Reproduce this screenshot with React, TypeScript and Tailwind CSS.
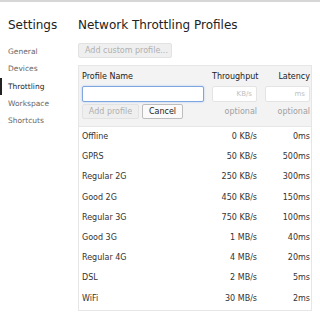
import React from 'react';

interface Profile {
  name: string;
  throughput: string;
  latency: string;
}

const profiles: Profile[] = [
  { name: 'Offline', throughput: '0 KB/s', latency: '0ms' },
  { name: 'GPRS', throughput: '50 KB/s', latency: '500ms' },
  { name: 'Regular 2G', throughput: '250 KB/s', latency: '300ms' },
  { name: 'Good 2G', throughput: '450 KB/s', latency: '150ms' },
  { name: 'Regular 3G', throughput: '750 KB/s', latency: '100ms' },
  { name: 'Good 3G', throughput: '1 MB/s', latency: '40ms' },
  { name: 'Regular 4G', throughput: '4 MB/s', latency: '20ms' },
  { name: 'DSL', throughput: '2 MB/s', latency: '5ms' },
  { name: 'WiFi', throughput: '30 MB/s', latency: '2ms' },
];

const navItems = ['General', 'Devices', 'Throttling', 'Workspace', 'Shortcuts'];

const grid = 'grid grid-cols-[122px_45px_45px] gap-x-[8px] pl-[3px]';

const App: React.FC = () => {
  return (
    <div className="h-[318px] w-[320px] overflow-hidden bg-white font-['DejaVu_Sans',sans-serif] text-[#333]">
      <div className="h-[2px] bg-[#d6d6d6]" />
      <div className="flex">
        <aside className="w-[78px] shrink-0">
          <h1 className="pl-2 pt-[15px] text-[12px] leading-[16px] text-[#222]">
            Settings
          </h1>
          <nav className="mt-[10px] flex flex-col">
            {navItems.map((item) =>
              item === 'Throttling' ? (
                <div
                  key={item}
                  className="flex h-[17.25px] items-center border-l-2 border-[#222] pl-[6px] text-[7.5px] text-[#222]"
                >
                  {item}
                </div>
              ) : (
                <div
                  key={item}
                  className="flex h-[17.25px] items-center pl-2 text-[7.5px] text-[#666]"
                >
                  {item}
                </div>
              )
            )}
          </nav>
        </aside>

        <main className="w-[234px]">
          <h2 className="pt-[15px] text-[12px] leading-[16px] text-[#222]">
            Network Throttling Profiles
          </h2>
          <button
            disabled
            className="mt-[10px] flex h-[15px] w-[94px] items-center rounded-[2px] border border-[#e2e2e2] bg-[#efefef] pl-[6px] text-[8px] text-[#b0b0b0]"
          >
            Add custom profile...
          </button>

          <div className="mt-[7px] border border-[#e6e6e6]">
            <div className="border-b border-[#e6e6e6] bg-[#f3f3f3] pb-[7px] pt-[2px]">
              <div className={`${grid} h-[18px] items-center text-[8px] text-[#222]`}>
                <span>Profile Name</span>
                <span className="text-right">Throughput</span>
                <span className="text-right">Latency</span>
              </div>
              <div className={`${grid} h-[16px]`}>
                <input
                  className="h-full rounded-[2px] border border-[#7ea6e0] bg-white px-1 text-[8px] shadow-[0_0_2px_#9fc0ee] outline-none"
                  autoFocus
                />
                <input
                  placeholder="KB/s"
                  className="h-full w-full rounded-[2px] border border-[#e4e4e4] bg-white px-[4px] text-right text-[7px] outline-none placeholder:text-[#c0c0c0]"
                />
                <input
                  placeholder="ms"
                  className="h-full w-full rounded-[2px] border border-[#e4e4e4] bg-white px-[4px] text-right text-[7px] outline-none placeholder:text-[#c0c0c0]"
                />
              </div>
              <div className={`${grid} mt-[2px] h-[15px] items-center text-[8px]`}>
                <div className="flex h-full gap-[3px]">
                  <button
                    disabled
                    className="h-full w-[57px] rounded-[2px] border border-[#e2e2e2] bg-[#efefef] text-[#b0b0b0]"
                  >
                    Add profile
                  </button>
                  <button className="h-full w-[41px] rounded-[2px] border border-[#bdbdbd] bg-[#fafafa] text-[#222]">
                    Cancel
                  </button>
                </div>
                <span className="text-right text-[#a0a0a0]">optional</span>
                <span className="text-right text-[#a0a0a0]">optional</span>
              </div>
            </div>

            <div className="pb-[1px]">
              {profiles.map((p) => (
                <div key={p.name} className={`${grid} h-[20.2px] items-center text-[8px]`}>
                  <span>{p.name}</span>
                  <span className="text-right">{p.throughput}</span>
                  <span className="text-right">{p.latency}</span>
                </div>
              ))}
            </div>
          </div>
        </main>
      </div>
    </div>
  );
};

export default App;
